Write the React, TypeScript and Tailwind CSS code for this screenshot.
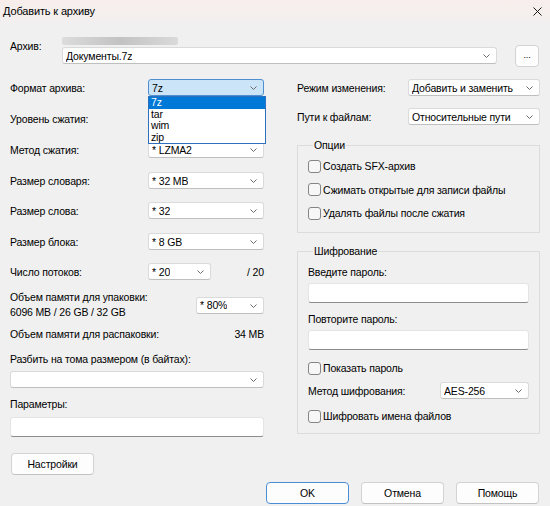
import React from 'react';
import clsx from 'clsx';

const Chevron: React.FC = () => (
  <svg width="7" height="4" viewBox="0 0 7 4" className="shrink-0">
    <path d="M0.5 0.5 L3.5 3.5 L6.5 0.5" fill="none" stroke="#6a6a6a" strokeWidth="1" />
  </svg>
);

const Combo: React.FC<{ value?: string; className?: string; focused?: boolean }> = (props) => {
  return (
    <div
      className={clsx(
        'h-[17px] flex items-center justify-between rounded-[3px] border pl-[3px] pr-[6px] shrink-0',
        props.focused
          ? 'bg-[#cce4f7] border-[#4f8fd1]'
          : 'bg-white border-[#dadada] border-b-[#bfbfbf]',
        props.className,
      )}
    >
      <span className="whitespace-nowrap overflow-hidden">{props.value}</span>
      <Chevron />
    </div>
  );
};

const TextInput: React.FC<{ className?: string }> = (props) => (
  <div
    className={clsx(
      'h-[20px] bg-white rounded-[3px] border border-[#e4e4e4] border-b-[#8c8c8c]',
      props.className,
    )}
  />
);

const Checkbox: React.FC<{ label: string; className?: string }> = (props) => (
  <div className={clsx('flex items-center gap-[2px] h-[14px]', props.className)}>
    <div className="w-[13px] h-[13px] rounded-[3px] border border-[#858585] bg-[#f7f7f7]" />
    <span>{props.label}</span>
  </div>
);

const Button: React.FC<{ className?: string; primary?: boolean; children: React.ReactNode }> = (props) => (
  <div
    className={clsx(
      'h-[22px] w-[83px] flex items-center justify-center rounded-[4px] bg-[#fdfdfd] border',
      props.primary ? 'border-[#4a8ed6]' : 'border-[#d3d3d3] border-b-[#c2c2c2]',
      props.className,
    )}
  >
    {props.children}
  </div>
);

const Row: React.FC<{ label: string; className?: string; children: React.ReactNode }> = (props) => (
  <div className={clsx('flex items-center justify-between h-[17px]', props.className)}>
    <span>{props.label}</span>
    {props.children}
  </div>
);

const FormatDropdown: React.FC = () => {
  const items = ['7z', 'tar', 'wim', 'zip'];
  return (
    <div className="absolute left-0 top-[17px] w-[118px] bg-white border border-[#2f6fbf] z-10">
      {items.map((item, i) => (
        <div
          key={item}
          className={clsx(
            'h-[11.5px] leading-[11.5px] pl-[2px]',
            i === 0 ? 'bg-[#0078d7] text-white' : 'text-black',
          )}
        >
          {item}
        </div>
      ))}
    </div>
  );
};

export default function App() {
  return (
    <div className="w-[550px] h-[506px] bg-[#f0f0f0] text-black text-[10.5px] tracking-[-0.15px] leading-[14px] font-['Liberation_Sans',Arial,sans-serif] flex flex-col">
      {/* title bar */}
      <div className="h-[22px] flex items-center justify-between pl-[3px] pr-[8px] bg-gradient-to-b from-[#f8eeeb] to-[#f2efee]">
        <span className="text-[11px]">Добавить к архиву</span>
        <svg width="9" height="9" viewBox="0 0 9 9">
          <path d="M0.5 0.5 L8.5 8.5 M8.5 0.5 L0.5 8.5" stroke="#1a1a1a" strokeWidth="1" />
        </svg>
      </div>

      {/* archive path */}
      <div className="h-[45px] flex pl-[10px] pr-[11px]">
        <span className="w-[52px] mt-[17px]">Архив:</span>
        <div className="flex flex-col w-[435px]">
          <div className="mt-[15px] h-[8px] w-[116px] rounded-[2px] bg-gradient-to-r from-[#dcdcdc] via-[#c2c2c2] to-[#dadada] blur-[0.6px]" />
          <Combo value="Документы.7z" className="mt-[2px] w-full" />
        </div>
        <div className="ml-auto mt-[23px] w-[24px] h-[22px] rounded-[4px] bg-[#fdfdfd] border border-[#d3d3d3] flex items-center justify-center text-[9px] leading-none pb-[2px]">
          ...
        </div>
      </div>

      {/* main area */}
      <div className="mt-[12px] flex pl-[10px] pr-[10px] gap-[33px]">
        {/* left column */}
        <div className="w-[254px] flex flex-col">
          <Row label="Формат архива:">
            <div className="relative">
              <Combo value="7z" focused className="w-[116px]" />
              <FormatDropdown />
            </div>
          </Row>
          <Row label="Уровень сжатия:" className="mt-[14px]">
            <Combo className="w-[116px]" />
          </Row>
          <Row label="Метод сжатия:" className="mt-[14px]">
            <Combo value="*  LZMA2" className="w-[116px]" />
          </Row>
          <Row label="Размер словаря:" className="mt-[14px]">
            <Combo value="*  32 MB" className="w-[116px]" />
          </Row>
          <Row label="Размер слова:" className="mt-[13px]">
            <Combo value="*  32" className="w-[116px]" />
          </Row>
          <Row label="Размер блока:" className="mt-[14px]">
            <Combo value="*  8 GB" className="w-[116px]" />
          </Row>
          <div className="mt-[13px] flex items-center h-[17px]">
            <span className="w-[138px]">Число потоков:</span>
            <Combo value="*  20" className="w-[63px]" />
            <span className="flex-1 text-right">/ 20</span>
          </div>

          <div className="mt-[10px] flex justify-between leading-[15px]">
            <div className="flex flex-col">
              <span>Объем памяти для упаковки:</span>
              <span>6096 MB / 26 GB / 32 GB</span>
            </div>
            <Combo value="*  80%" className="mt-[7px] w-[68px]" />
          </div>
          <div className="mt-[7px] flex justify-between leading-[15px]">
            <span>Объем памяти для распаковки:</span>
            <span>34 MB</span>
          </div>

          <span className="mt-[10px] leading-[15px]">Разбить на тома размером (в байтах):</span>
          <Combo className="mt-[4px] w-full" />

          <span className="mt-[9px] leading-[15px]">Параметры:</span>
          <TextInput className="mt-[5px] w-full" />

          <Button className="mt-[16px] ml-[1px]">Настройки</Button>
        </div>

        {/* right column */}
        <div className="w-[243px] flex flex-col">
          <Row label="Режим изменения:">
            <Combo value="Добавить и заменить" className="w-[132px]" />
          </Row>
          <Row label="Пути к файлам:" className="mt-[12px]">
            <Combo value="Относительные пути" className="w-[132px]" />
          </Row>

          <fieldset className="mt-[13px] border border-[#dcdcdc] pl-[10px] pr-[10px] pt-[7px] pb-[12px] flex flex-col gap-[9.5px]">
            <legend className="ml-[5px] px-[1px]">Опции</legend>
            <Checkbox label="Создать SFX-архив" />
            <Checkbox label="Сжимать открытые для записи файлы" />
            <Checkbox label="Удалять файлы после сжатия" />
          </fieldset>

          <fieldset className="mt-[11px] border border-[#dcdcdc] pl-[10px] pr-[10px] pb-[10px] flex flex-col">
            <legend className="ml-[5px] px-[1px]">Шифрование</legend>
            <span className="mt-[7px]">Введите пароль:</span>
            <TextInput className="mt-[4px] w-full" />
            <span className="mt-[9px]">Повторите пароль:</span>
            <TextInput className="mt-[4px] w-full" />
            <Checkbox label="Показать пароль" className="mt-[11px]" />
            <Row label="Метод шифрования:" className="mt-[7px]">
              <Combo value="AES-256" className="w-[89px]" />
            </Row>
            <Checkbox label="Шифровать имена файлов" className="mt-[10px]" />
          </fieldset>
        </div>
      </div>

      {/* bottom buttons */}
      <div className="mt-[7px] flex justify-end gap-[12px] pr-[11px]">
        <Button primary>OK</Button>
        <Button>Отмена</Button>
        <Button>Помощь</Button>
      </div>
    </div>
  );
}
